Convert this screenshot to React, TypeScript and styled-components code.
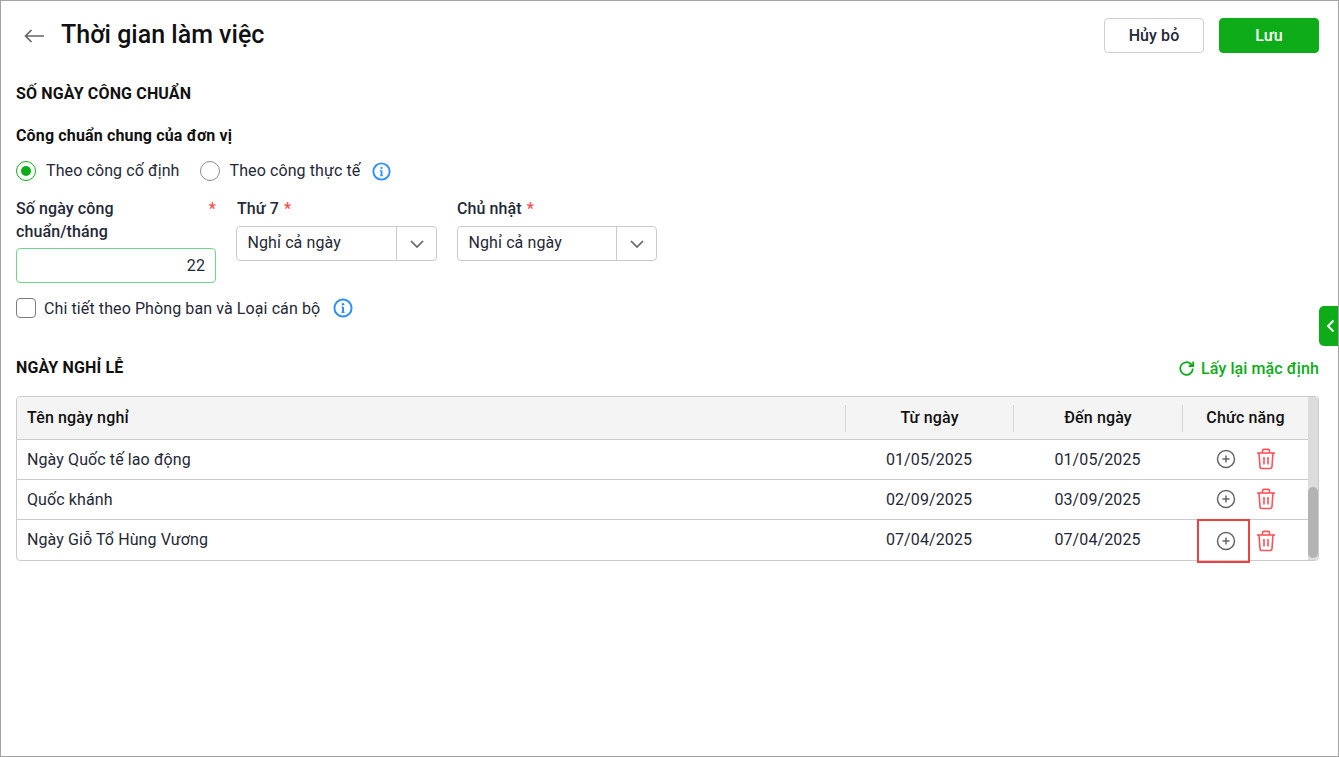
import React from "react";
import styled, { createGlobalStyle } from "styled-components";

const Global = createGlobalStyle`
  html, body { margin: 0; padding: 0; background: #fff; }
  body { font-family: Roboto, "Noto Sans", sans-serif; font-size: 16px; color: #111827; letter-spacing: 0.1px; }
  * { box-sizing: border-box; }
`;

const Frame = styled.div`
  position: relative;
  width: 1339px;
  height: 757px;
  border: 1px solid #a3a3a3;
  padding: 17px 19px 0 15px;
  overflow: hidden;
`;
const Header = styled.header`
  display: flex;
  align-items: center;
  justify-content: space-between;
  height: 35px;
`;
const TitleWrap = styled.div`
  display: flex;
  align-items: center;
  gap: 17px;
  padding-left: 8px;
`;
const Title = styled.h1`
  margin: 0;
  padding-bottom: 2px;
  font-size: 25px;
  font-weight: 500;
  letter-spacing: 0;
  color: #111;
  line-height: 32px;
`;
const Actions = styled.div`
  display: flex;
  gap: 15px;
`;
const Button = styled.button<{ $primary?: boolean }>`
  width: 100px;
  height: 35px;
  border-radius: 4px;
  font: 500 16px Roboto, sans-serif;
  letter-spacing: 0.1px;
  cursor: pointer;
  border: 1px solid ${(p) => (p.$primary ? "#0eac19" : "#cfcfcf")};
  background: ${(p) => (p.$primary ? "#0eac19" : "#fff")};
  color: ${(p) => (p.$primary ? "#fff" : "#1f2937")};
`;
const SectionTitle = styled.h2`
  margin: 0;
  font-size: 16px;
  font-weight: 700;
  line-height: 20px;
  letter-spacing: 0.15px;
  color: #111;
`;
const FirstSection = styled.section`
  margin-top: 31px;
`;
const SubTitle = styled.h3`
  margin: 22px 0 0;
  font-size: 16px;
  font-weight: 700;
  line-height: 20px;
  letter-spacing: 0.15px;
  color: #111;
`;
const RadioRow = styled.div`
  display: flex;
  align-items: center;
  margin-top: 15px;
  height: 20px;
`;
const RadioLabel = styled.label`
  display: flex;
  align-items: center;
  gap: 10px;
  margin-right: 20px;
  line-height: 20px;
  color: #1f2937;
`;
const RadioMark = styled.span<{ $on?: boolean }>`
  width: 20px;
  height: 20px;
  border-radius: 50%;
  border: 1px solid ${(p) => (p.$on ? "#0eac19" : "#8a8a8a")};
  display: flex;
  align-items: center;
  justify-content: center;
  &::after {
    content: "";
    width: 10px;
    height: 10px;
    border-radius: 50%;
    background: ${(p) => (p.$on ? "#0eac19" : "transparent")};
  }
`;
const FieldRow = styled.div`
  display: flex;
  gap: 20px;
  margin-top: 16px;
`;
const Field = styled.div<{ $width: number }>`
  width: ${(p) => p.$width}px;
`;
const FieldLabel = styled.div<{ $spread?: boolean; $inset?: boolean }>`
  display: flex;
  justify-content: ${(p) => (p.$spread ? "space-between" : "flex-start")};
  gap: 5px;
  font-weight: 500;
  line-height: 23px;
  color: #1f2937;
  margin-bottom: 5px;
  padding-left: ${(p) => (p.$inset ? "1px" : "0")};
`;
const Star = styled.span`
  color: #f84a4a;
`;
const NumberInput = styled.div`
  height: 35px;
  border: 1px solid #6fd68b;
  border-radius: 4px;
  display: flex;
  align-items: center;
  justify-content: flex-end;
  padding-right: 10px;
  color: #1f2937;
`;
const Select = styled.div`
  height: 35px;
  border: 1px solid #cbcbcb;
  border-radius: 4px;
  display: flex;
  align-items: stretch;
  margin-top: 6px;
`;
const SelectValue = styled.div`
  flex: 1;
  display: flex;
  align-items: center;
  padding: 0 0 2px 10.5px;
  color: #1f2937;
`;
const SelectArrow = styled.div`
  width: 40px;
  border-left: 1px solid #cbcbcb;
  display: flex;
  align-items: center;
  justify-content: center;
`;
const CheckRow = styled.div`
  display: flex;
  align-items: center;
  margin-top: 14px;
  height: 22px;
  color: #1f2937;
`;
const CheckBox = styled.span`
  width: 20px;
  height: 20px;
  border: 1px solid #7d7d7d;
  border-radius: 4px;
  margin-right: 8px;
`;
const InfoSlot = styled.span<{ $gap: number }>`
  display: inline-flex;
  margin-left: ${(p) => p.$gap}px;
`;
const HolidayHead = styled.div`
  display: flex;
  align-items: center;
  justify-content: space-between;
  margin-top: 38px;
  height: 22px;
`;
const HolidayTitle = styled(SectionTitle)`
  margin-top: -1px;
`;
const ResetLink = styled.a`
  display: flex;
  align-items: center;
  gap: 6px;
  font-weight: 500;
  color: #0eac19;
  margin-top: 1px;
`;
const Table = styled.div`
  position: relative;
  margin-top: 17px;
  height: 165px;
  border: 1px solid #cbcbcb;
  border-radius: 4px;
`;
const HeadRow = styled.div`
  display: grid;
  grid-template-columns: 828px 168px 169px 126px;
  height: 43px;
  background: #f4f4f4;
  border-bottom: 1px solid #cbcbcb;
  border-radius: 3px 3px 0 0;
  align-items: center;
  font-weight: 500;
  letter-spacing: 0.15px;
  color: #111;
`;
const HeadCell = styled.div<{ $first?: boolean }>`
  height: 27px;
  display: flex;
  align-items: center;
  justify-content: ${(p) => (p.$first ? "flex-start" : "center")};
  padding-left: ${(p) => (p.$first ? "10px" : "0")};
  padding-bottom: 2px;
  border-left: ${(p) => (p.$first ? "none" : "1px solid #d6d6d6")};
`;
const Row = styled.div<{ $last?: boolean }>`
  display: grid;
  grid-template-columns: 828px 168px 169px 126px;
  height: ${(p) => (p.$last ? "41px" : "40px")};
  padding-bottom: ${(p) => (p.$last ? "2px" : "0")};
  border-bottom: ${(p) => (p.$last ? "none" : "1px solid #cbcbcb")};
  align-items: center;
  color: #1f2937;
`;
const NameCell = styled.div`
  padding-left: 10px;
`;
const DateCell = styled.div`
  text-align: center;
`;
const ActionCell = styled.div<{ $last?: boolean }>`
  position: relative;
  display: flex;
  align-items: center;
  align-self: stretch;
  margin-bottom: ${(p) => (p.$last ? "-2px" : "0")};
  padding: 0 0 ${(p) => (p.$last ? "0" : "1px")} 33.5px;
  gap: 20px;
`;
const Highlight = styled.div`
  position: absolute;
  left: 15px;
  top: -1px;
  width: 53px;
  height: 44px;
  border: 2px solid #f04040;
`;
const ScrollTrack = styled.div`
  position: absolute;
  top: 0;
  right: 0;
  bottom: 0;
  width: 10px;
  background: #dcdcdc;
  border-radius: 0 3px 3px 0;
`;
const ScrollThumb = styled.div`
  position: absolute;
  left: 0;
  right: 0;
  bottom: 2px;
  height: 71px;
  border-radius: 5px;
  background: #b3b3b3;
`;
const SideTab = styled.button`
  position: absolute;
  right: 0;
  top: 305px;
  width: 19px;
  height: 40px;
  padding: 0 0 0 4px;
  border: none;
  border-radius: 5px 0 0 5px;
  background: #0eac19;
  display: flex;
  align-items: center;
  justify-content: center;
`;

const Info = ({ size = 20 }: { size?: number }) => (
  <svg width={size} height={size} viewBox="0 0 20 20" fill="none">
    <circle cx="10" cy="10" r="8.6" stroke="#2f8fff" strokeWidth="2" />
    <circle cx="10" cy="6.2" r="1.2" fill="#2f8fff" />
    <path d="M10 9v5.4" stroke="#2f8fff" strokeWidth="2" />
    <path d="M8.4 9h1.6M8.4 14.4h3.2" stroke="#2f8fff" strokeWidth="1.1" />
  </svg>
);
const Chevron = () => (
  <svg width="14" height="8" viewBox="0 0 14 8" fill="none">
    <path d="M1 1l6 6 6-6" stroke="#666" strokeWidth="1.7" />
  </svg>
);
const Plus = () => (
  <svg width="20" height="20" viewBox="0 0 20 20" fill="none">
    <circle cx="10" cy="10" r="8.5" stroke="#666" strokeWidth="1.5" />
    <path d="M10 6.500v7M6.500 10h7" stroke="#666" strokeWidth="1.5" />
  </svg>
);
const Trash = () => (
  <svg width="20" height="22" viewBox="0 0 20 22" fill="none" stroke="#f8555a" strokeWidth="1.600">
    <path d="M1 5h18" />
    <path d="M6.500 5V2.600c0-.7.5-1.200 1.200-1.200h4.600c.7 0 1.200.5 1.200 1.200V5" />
    <path d="M3 5l1 13.600c.1 1 .9 1.900 2 1.900h8c1.100 0 1.900-.9 2-1.900L17 5" />
    <path d="M8 9v7.500M12 9v7.500" />
  </svg>
);
const Refresh = () => (
  <svg width="17" height="17" viewBox="0 0 17 17" fill="none" stroke="#0eac19" strokeWidth="1.800">
    <path d="M14.800 8.500a6.300 6.300 0 1 1-1.900-4.500L15 6" />
    <path d="M15.200 1.500V6h-4.500" />
  </svg>
);

const rows = [
  ["Ngày Quốc tế lao động", "01/05/2025", "01/05/2025"],
  ["Quốc khánh", "02/09/2025", "03/09/2025"],
  ["Ngày Giỗ Tổ Hùng Vương", "07/04/2025", "07/04/2025"],
];

export default function App() {
  return (
    <Frame>
      <Global />
      <Header>
        <TitleWrap>
          <svg width="20" height="14" viewBox="0 0 20 14" fill="none">
            <path d="M20 7H1.500M7.500 1l-6 6 6 6" stroke="#666" strokeWidth="1.700" />
          </svg>
          <Title>Thời gian làm việc</Title>
        </TitleWrap>
        <Actions>
          <Button>Hủy bỏ</Button>
          <Button $primary>Lưu</Button>
        </Actions>
      </Header>

      <FirstSection>
        <SectionTitle>SỐ NGÀY CÔNG CHUẨN</SectionTitle>
        <SubTitle>Công chuẩn chung của đơn vị</SubTitle>
        <RadioRow>
          <RadioLabel>
            <RadioMark $on />
            Theo công cố định
          </RadioLabel>
          <RadioLabel>
            <RadioMark />
            Theo công thực tế
          </RadioLabel>
          <InfoSlot $gap={-8}>
            <Info size={19} />
          </InfoSlot>
        </RadioRow>
        <FieldRow>
          <Field $width={200}>
            <FieldLabel $spread>
              <span>
                Số ngày công
                <br />
                chuẩn/tháng
              </span>
              <Star>*</Star>
            </FieldLabel>
            <NumberInput>22</NumberInput>
          </Field>
          <Field $width={201}>
            <FieldLabel $inset>
              Thứ 7 <Star>*</Star>
            </FieldLabel>
            <Select>
              <SelectValue>Nghỉ cả ngày</SelectValue>
              <SelectArrow>
                <Chevron />
              </SelectArrow>
            </Select>
          </Field>
          <Field $width={200}>
            <FieldLabel>
              Chủ nhật <Star>*</Star>
            </FieldLabel>
            <Select>
              <SelectValue>Nghỉ cả ngày</SelectValue>
              <SelectArrow>
                <Chevron />
              </SelectArrow>
            </Select>
          </Field>
        </FieldRow>
        <CheckRow>
          <CheckBox />
          Chi tiết theo Phòng ban và Loại cán bộ
          <InfoSlot $gap={13}>
            <Info />
          </InfoSlot>
        </CheckRow>
      </FirstSection>

      <section>
        <HolidayHead>
          <HolidayTitle>NGÀY NGHỈ LỄ</HolidayTitle>
          <ResetLink>
            <Refresh />
            Lấy lại mặc định
          </ResetLink>
        </HolidayHead>
        <Table>
          <HeadRow>
            <HeadCell $first>Tên ngày nghỉ</HeadCell>
            <HeadCell>Từ ngày</HeadCell>
            <HeadCell>Đến ngày</HeadCell>
            <HeadCell>Chức năng</HeadCell>
          </HeadRow>
          {rows.map((r, i) => (
            <Row key={r[0]} $last={i === 2}>
              <NameCell>{r[0]}</NameCell>
              <DateCell>{r[1]}</DateCell>
              <DateCell>{r[2]}</DateCell>
              <ActionCell $last={i === 2}>
                <Plus />
                <Trash />
                {i === 2 && <Highlight />}
              </ActionCell>
            </Row>
          ))}
          <ScrollTrack>
            <ScrollThumb />
          </ScrollTrack>
        </Table>
      </section>

      <SideTab aria-label="Mở">
        <svg width="9" height="14" viewBox="0 0 9 14" fill="none">
          <path d="M7.500 1.500L2 7l5.500 5.500" stroke="#fff" strokeWidth="2" />
        </svg>
      </SideTab>
    </Frame>
  );
}
